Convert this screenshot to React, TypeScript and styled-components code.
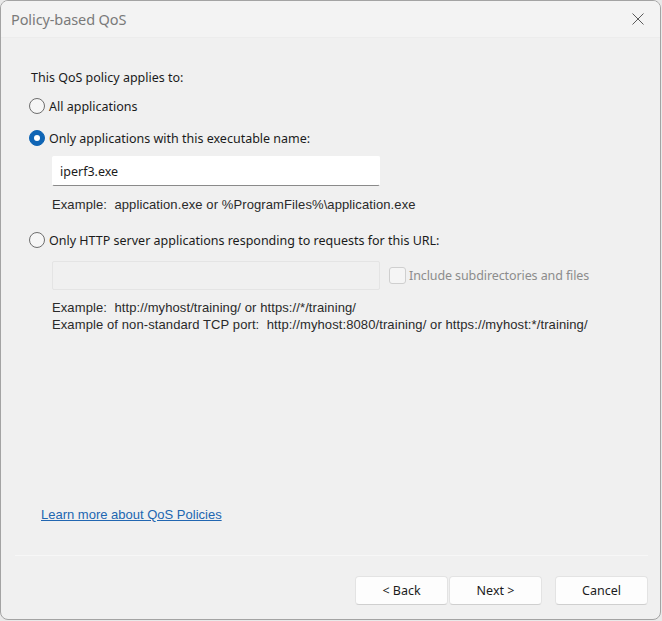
import React from 'react';
import styled, { createGlobalStyle } from 'styled-components';

const GlobalStyle = createGlobalStyle`
  html, body {
    margin: 0;
    padding: 0;
    background: #e9e9e9;
  }
  * {
    box-sizing: border-box;
  }
`;

const Window = styled.div`
  width: 661px;
  height: 620px;
  display: flex;
  flex-direction: column;
  background: #f0f0f0;
  border: 1px solid #a3a3a3;
  border-radius: 8px;
  overflow: hidden;
  font-family: 'Noto Sans', 'Liberation Sans', sans-serif;
  color: #1b1b1b;
`;

const TitleBar = styled.div`
  height: 37px;
  flex: none;
  display: flex;
  align-items: center;
  justify-content: space-between;
  padding: 0 16px 0 10px;
  background: #f3f3f3;
  border-bottom: 1px solid #ececec;
`;

const Title = styled.span`
  font-size: 14.5px;
  color: #7a7a7a;
  letter-spacing: -0.1px;
`;

const Body = styled.div`
  flex: 1;
  display: flex;
  flex-direction: column;
  padding: 31px 29px 0 28px;
`;

const Label = styled.div<{ $gap?: number }>`
  font-size: 12.5px;
  line-height: 18px;
  margin-top: ${p => p.$gap ?? 0}px;
  padding-left: 2px;
`;

const RadioRow = styled.label<{ $gap: number }>`
  display: flex;
  align-items: center;
  gap: 4px;
  height: 18px;
  margin-top: ${p => p.$gap}px;
  font-size: 12.5px;
`;

const RadioMark = styled.span<{ $checked?: boolean }>`
  width: 16px;
  height: 16px;
  flex: none;
  border-radius: 50%;
  display: flex;
  align-items: center;
  justify-content: center;
  background: ${p => (p.$checked ? '#0f65b5' : '#f6f6f6')};
  border: 1px solid ${p => (p.$checked ? '#0f65b5' : '#6e6e6e')};

  &::after {
    content: '';
    display: ${p => (p.$checked ? 'block' : 'none')};
    width: 6px;
    height: 6px;
    border-radius: 50%;
    background: #ffffff;
  }
`;

const Indented = styled.div<{ $gap: number }>`
  margin-top: ${p => p.$gap}px;
  padding-left: 23px;
  display: flex;
  align-items: center;
  gap: 9px;
`;

const TextBox = styled.div<{ $disabled?: boolean }>`
  width: 328px;
  height: ${p => (p.$disabled ? 29 : 30)}px;
  display: flex;
  align-items: center;
  padding-left: 7px;
  font-size: 12.5px;
  background: ${p => (p.$disabled ? '#f0f0f0' : '#ffffff')};
  border: 1px solid ${p => (p.$disabled ? '#e4e4e4' : '#ffffff')};
  border-bottom-color: ${p => (p.$disabled ? '#e4e4e4' : '#8a8a8a')};
  border-radius: 2px;
`;

const CheckRow = styled.div`
  display: flex;
  align-items: center;
  gap: 3px;
  font-size: 12.5px;
  color: #8c8c8c;
  letter-spacing: -0.1px;
`;

const CheckBox = styled.span`
  width: 17px;
  height: 17px;
  border: 1px solid #cfcfcf;
  border-radius: 3px;
  background: #f5f5f5;
`;

const Example = styled.div<{ $gap: number }>`
  margin-top: ${p => p.$gap}px;
  padding-left: 23px;
  font-family: 'Liberation Sans', Arial, sans-serif;
  font-size: 13px;
  line-height: 17px;
  color: #2a2a2a;
  letter-spacing: 0.1px;
  white-space: pre;
`;

const Link = styled.a`
  margin-top: auto;
  margin-left: 12px;
  margin-bottom: 31px;
  font-family: 'Liberation Sans', Arial, sans-serif;
  font-size: 13px;
  line-height: 18px;
  color: #2166b1;
  text-decoration: underline;
  cursor: pointer;
`;

const Footer = styled.div`
  flex: none;
  padding: 0 12px 14px 14px;
`;

const Separator = styled.div`
  height: 1px;
  background: #a9a9a9;
  border-bottom: 1px solid #f7f7f7;
`;

const ButtonRow = styled.div`
  display: flex;
  justify-content: flex-end;
  margin-top: 20px;
`;

const Button = styled.button<{ $gapLeft?: number }>`
  width: 93px;
  height: 29px;
  margin-left: ${p => p.$gapLeft ?? 0}px;
  background: #fdfdfd;
  border: 1px solid #e3e3e3;
  border-bottom-color: #cfcfcf;
  border-radius: 4px;
  font-family: 'Noto Sans', 'Liberation Sans', sans-serif;
  font-size: 12.5px;
  color: #1b1b1b;
  padding: 0;
`;

const CloseIcon = () => (
  <svg width="12" height="12" viewBox="0 0 12 12">
    <path d="M0.5 0.5 L11.5 11.5 M11.5 0.5 L0.5 11.5" stroke="#5a5a5a" strokeWidth="1" fill="none" />
  </svg>
);

const App: React.FC = () => {
  return (
    <>
      <GlobalStyle />
      <Window>
        <TitleBar>
          <Title>Policy-based QoS</Title>
          <CloseIcon />
        </TitleBar>
        <Body>
          <Label>This QoS policy applies to:</Label>
          <RadioRow $gap={10}>
            <RadioMark />
            All applications
          </RadioRow>
          <RadioRow $gap={14}>
            <RadioMark $checked />
            Only applications with this executable name:
          </RadioRow>
          <Indented $gap={9}>
            <TextBox>iperf3.exe</TextBox>
          </Indented>
          <Example $gap={10}>{'Example:  application.exe or %ProgramFiles%\\application.exe'}</Example>
          <RadioRow $gap={18}>
            <RadioMark />
            Only HTTP server applications responding to requests for this URL:
          </RadioRow>
          <Indented $gap={12}>
            <TextBox $disabled />
            <CheckRow>
              <CheckBox />
              Include subdirectories and files
            </CheckRow>
          </Indented>
          <Example $gap={9}>
            {'Example:  http://myhost/training/ or https://*/training/\nExample of non-standard TCP port:  http://myhost:8080/training/ or https://myhost:*/training/'}
          </Example>
          <Link>Learn more about QoS Policies</Link>
        </Body>
        <Footer>
          <Separator />
          <ButtonRow>
            <Button>&lt; Back</Button>
            <Button $gapLeft={1}>Next &gt;</Button>
            <Button $gapLeft={13}>Cancel</Button>
          </ButtonRow>
        </Footer>
      </Window>
    </>
  );
};

export default App;
